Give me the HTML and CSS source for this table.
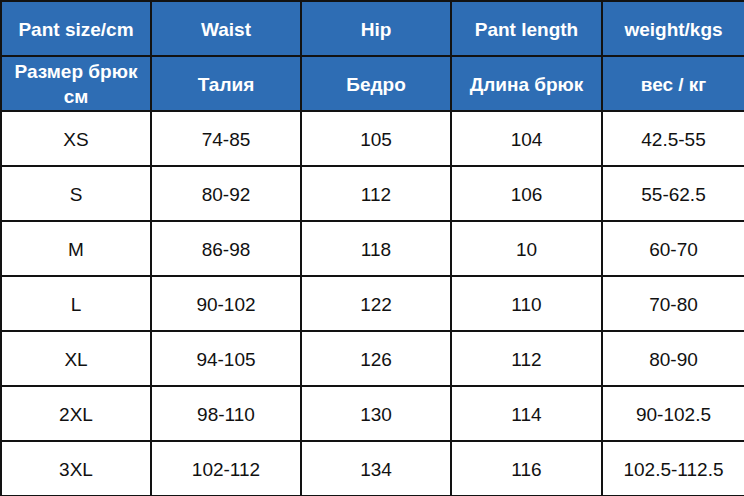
FILE: index.html
```html
<!DOCTYPE html>
<html lang="ru">
<head>
<meta charset="utf-8">
<title>Size chart</title>
<link rel="stylesheet" href="styles.css">
</head>
<body>
<table class="chart">
  <colgroup>
    <col class="c1"><col class="c2"><col class="c3"><col class="c4"><col class="c5">
  </colgroup>
  <thead>
    <tr class="head">
      <th>Pant size/cm</th><th>Waist</th><th>Hip</th><th>Pant length</th><th>weight/kgs</th>
    </tr>
    <tr class="head">
      <th class="two">Размер брюк<br>см</th><th>Талия</th><th>Бедро</th><th>Длина брюк</th><th>вес / кг</th>
    </tr>
  </thead>
  <tbody>
    <tr><td>XS</td><td>74-85</td><td>105</td><td>104</td><td>42.5-55</td></tr>
    <tr><td>S</td><td>80-92</td><td>112</td><td>106</td><td>55-62.5</td></tr>
    <tr><td>M</td><td>86-98</td><td>118</td><td>10</td><td>60-70</td></tr>
    <tr><td>L</td><td>90-102</td><td>122</td><td>110</td><td>70-80</td></tr>
    <tr><td>XL</td><td>94-105</td><td>126</td><td>112</td><td>80-90</td></tr>
    <tr><td>2XL</td><td>98-110</td><td>130</td><td>114</td><td>90-102.5</td></tr>
    <tr><td>3XL</td><td>102-112</td><td>134</td><td>116</td><td>102.5-112.5</td></tr>
  </tbody>
</table>
</body>
</html>
```
FILE: styles.css
```css
html, body {
  margin: 0;
  padding: 0;
  background: #ffffff;
}
.chart {
  border-collapse: collapse;
  table-layout: fixed;
  width: 744px;
  font-family: "Liberation Sans", Arial, sans-serif;
  font-size: 19px;
  color: #111111;
}
.c1, .c2, .c3 { width: 150px; }
.c4 { width: 151px; }
.c5 { width: 143px; }
.chart th,
.chart td {
  border: 2px solid #121212;
  height: 51px;
  padding: 2px 0 0;
  text-align: center;
  vertical-align: middle;
}
.head th {
  background: #2e6db4;
  color: #ffffff;
  font-weight: bold;
}
.head th.two {
  line-height: 25px;
  padding-top: 0;
}
.chart tbody td {
  font-weight: normal;
}
```
